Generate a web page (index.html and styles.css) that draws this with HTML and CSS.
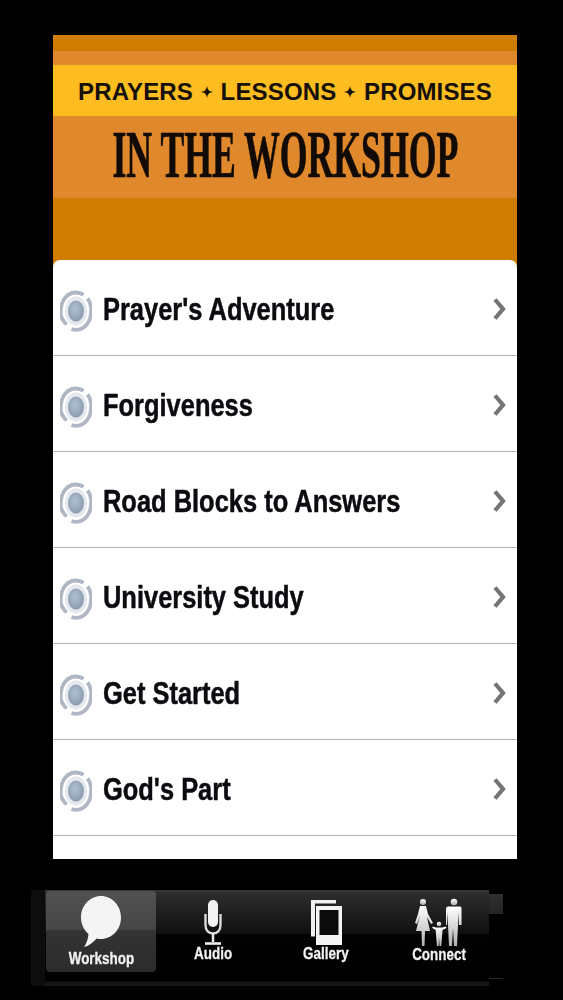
FILE: index.html
```html
<!DOCTYPE html>
<html lang="en">
<head>
<meta charset="utf-8">
<title>In the Workshop</title>
<link rel="stylesheet" href="styles.css">
</head>
<body>
<svg class="defs" width="0" height="0" aria-hidden="true">
  <defs>
    <radialGradient id="disc" cx="45%" cy="40%" r="60%">
      <stop offset="0" stop-color="#b3c2d2"/>
      <stop offset="1" stop-color="#8b9bab"/>
    </radialGradient>
    <linearGradient id="steel" x1="0" y1="0" x2="0" y2="1">
      <stop offset="0" stop-color="#ffffff"/>
      <stop offset="1" stop-color="#b0b0b0"/>
    </linearGradient>
    <symbol id="bullet" viewBox="0 0 32 42">
      <ellipse cx="16" cy="21" rx="11" ry="14.5" fill="#e4e9ef"/>
      <ellipse cx="16" cy="21" rx="8" ry="10.5" fill="url(#disc)"/>
      <path d="M6.500 34.500C1 29 0 25 0.800 19 1.800 9 8 2.500 16 2.500c3 0 5.500.8 7.500 2.200" fill="none" stroke="#aeb7c3" stroke-width="3.800"/>
      <path d="M27.500 8.500c2.800 3.500 3.700 8 3.700 12.500 0 10.500-6.500 18.800-15.200 18.800-1.600 0-3-.3-4.500-.9" fill="none" stroke="#aeb7c3" stroke-width="3.800"/>
    </symbol>
    <symbol id="chevron" viewBox="0 0 14 26">
      <path d="M3 3.500l8 9.500-8 9.500" fill="none" stroke="#747474" stroke-width="4.200"/>
    </symbol>
  </defs>
</svg>

<main class="screen">
  <header class="banner">
    <div class="band band-top"></div>
    <div class="band band-thin"></div>
    <div class="band band-yellow"><span class="tagline">PRAYERS <span class="sep">✦</span> LESSONS <span class="sep">✦</span> PROMISES</span></div>
    <div class="band band-title"><h1 class="title">IN THE WORKSHOP</h1></div>
    <div class="band band-bottom"></div>
  </header>
  <ul class="list">
    <li class="row"><svg class="bullet"><use href="#bullet"/></svg><span class="label">Prayer's Adventure</span><svg class="chevron"><use href="#chevron"/></svg></li>
    <li class="row"><svg class="bullet"><use href="#bullet"/></svg><span class="label">Forgiveness</span><svg class="chevron"><use href="#chevron"/></svg></li>
    <li class="row"><svg class="bullet"><use href="#bullet"/></svg><span class="label">Road Blocks to Answers</span><svg class="chevron"><use href="#chevron"/></svg></li>
    <li class="row"><svg class="bullet"><use href="#bullet"/></svg><span class="label">University Study</span><svg class="chevron"><use href="#chevron"/></svg></li>
    <li class="row"><svg class="bullet"><use href="#bullet"/></svg><span class="label">Get Started</span><svg class="chevron"><use href="#chevron"/></svg></li>
    <li class="row"><svg class="bullet"><use href="#bullet"/></svg><span class="label">God's Part</span><svg class="chevron"><use href="#chevron"/></svg></li>
  </ul>
</main>

<nav class="tabbar">
  <div class="stub-left"></div>
  <div class="bar">
    <div class="tab tab-workshop">
      <svg class="icon icon-bubble" viewBox="0 0 40 51"><path d="M20 0C31 0 40 9.500 40 21.500S31 43 20 43C18.500 43 17 42.800 15.500 42.400 12 46.500 7.500 50 3 51 5.500 47.500 7 43 7.500 38 3 34 0 28 0 21.500 0 9.500 9 0 20 0Z" fill="#f4f4f4"/></svg>
      <span class="tab-label">Workshop</span>
    </div>
    <div class="tab tab-audio">
      <svg class="icon icon-mic" viewBox="0 0 18 46"><rect x="4" y="0" width="10" height="27" rx="5" fill="#f2f2f2"/><path d="M1.500 14v11c0 5 3 8.500 7.500 8.500s7.500-3.500 7.500-8.500V14" fill="none" stroke="#dcdcdc" stroke-width="2.400"/><path d="M9 33v9" stroke="#e8e8e8" stroke-width="2.500"/><path d="M1 43.500h16" stroke="#eee" stroke-width="2.600"/></svg>
      <span class="tab-label">Audio</span>
    </div>
    <div class="tab tab-gallery">
      <svg class="icon icon-gallery" viewBox="0 0 31 45"><path d="M0 0h25v3.500H4v33H0Z" fill="#f0f0f0"/><rect x="5" y="6" width="26" height="39" fill="#f4f4f4"/><rect x="8.500" y="10" width="19" height="25" fill="#0b0b0b"/></svg>
      <span class="tab-label">Gallery</span>
    </div>
    <div class="tab tab-connect">
      <svg class="icon icon-family" viewBox="0 0 48 50" fill="url(#steel)"><circle cx="8" cy="4" r="3"/><path d="M5 8h6l2 8 5 9-2 1-4-7 3 14H10l-.5 15H7L6.500 33H1l4-16-3 9-2-1 3-9Z"/><circle cx="39" cy="4" r="3.300"/><path d="M33 8.500h12c1 0 1.500 1 1.500 2V27H44l-.5-13-.5 13-1 21h-3l-1-18-1 18h-3l-1-21-.5-13-.5 13H31V10.500c0-1 1-2 2-2Z"/><circle cx="24" cy="26" r="2.300"/><path d="M21 29.500h6l4-1 .5 1.500-4 2-.5 7-.7 9h-1.800l-.4-8-.4 8h-1.800l-.7-9-.5-7-3.500-2 .5-1.500Z"/></svg>
      <span class="tab-label">Connect</span>
    </div>
  </div>
  <div class="stub-right"></div>
</nav>
</body>
</html>
```

FILE: styles.css
```css
* { box-sizing: border-box; }

html, body {
  margin: 0;
  padding: 0;
  background: #000;
  height: 1000px;
  overflow: hidden;
}

.defs { display: block; height: 0; }

.screen {
  width: 464px;
  height: 824px;
  margin: 35px 0 0 53px;
  background: linear-gradient(#cf7c02 0, #cf7c02 240px, #fff 240px);
  overflow: hidden;
}

.banner {
  display: flex;
  flex-direction: column;
  height: 225px;
}

.band { display: flex; align-items: center; justify-content: center; }
.band-top { height: 16px; background: #cf7c02; }
.band-thin { height: 14px; background: #e0892c; }
.band-yellow { height: 51px; background: #fdbd20; padding-top: 2px; }
.band-title { height: 82px; background: #e0892c; padding-bottom: 7px; }
.band-bottom { height: 62px; background: #cf7c02; }

.tagline {
  font-family: "Liberation Sans", sans-serif;
  font-weight: 700;
  font-size: 24px;
  letter-spacing: 0.150px;
  color: #16100a;
  white-space: nowrap;
}

.sep { font-size: 14px; letter-spacing: 0; vertical-align: 3px; margin: 0 1px; }

.title {
  margin: 0;
  font-family: "Liberation Serif", serif;
  font-weight: 700;
  font-size: 68px;
  line-height: 1;
  color: #120a04;
  white-space: nowrap;
  transform: scaleX(0.525);
  -webkit-text-stroke: 0.7px #120a04;
}

.list {
  list-style: none;
  margin: 0;
  padding: 0;
  background: #fff;
  border-radius: 7px 7px 0 0;
}

.row {
  display: flex;
  align-items: center;
  height: 96px;
  padding: 0 11px 0 7px;
  border-bottom: 1.500px solid #b4b4b4;
}

.bullet { width: 32px; height: 42px; flex: none; margin-top: 7px; filter: blur(0.4px); }

.label {
  flex: 1;
  min-width: 0;
  margin-left: 11px;
  padding-top: 4px;
  font-family: "Liberation Sans", sans-serif;
  font-weight: 700;
  font-size: 32px;
  color: #0c0c10;
  white-space: nowrap;
  transform: scaleX(0.795);
  transform-origin: left center;
  -webkit-text-stroke: 0.5px #0c0c10;
}

.chevron { width: 14px; height: 26px; flex: none; margin-top: 3px; }

.tabbar {
  display: flex;
  align-items: flex-start;
  width: 472px;
  height: 96px;
  margin: 31px 0 0 31px;
}

.stub-left {
  width: 14px;
  height: 96px;
  background: #0d0d0d;
}

.bar {
  display: flex;
  align-items: flex-start;
  width: 444px;
  height: 96px;
  padding: 1px 0 0 1px;
  background:
    linear-gradient(#333 0, #3a3a3a 1px, #2e2e2e 2px, #0f0f0f 44px, #020202 44px, #000 91px, #161616 92px, #161616 100%);
}

.stub-right {
  width: 14px;
  height: 86px;
  margin-top: 4px;
  background:
    linear-gradient(#303030 0, #242424 20px, #000 20px, #000 84px, #2e2e2e 84px, #2e2e2e 85px, #000 85px);
}

.tab {
  display: flex;
  flex-direction: column;
  align-items: center;
  flex: none;
  height: 81px;
}

.tab-workshop {
  width: 110px;
  padding-top: 5px;
  border-radius: 4px;
  background: linear-gradient(#515151 0, #474747 39px, #343434 39px, #2b2b2b 100%);
}
.tab-audio { width: 114px; padding-top: 9px; }
.tab-gallery { width: 112px; padding-top: 9px; }
.tab-connect { width: 114px; padding-top: 7px; }

.icon { display: block; flex: none; }
.icon-bubble { width: 40px; height: 51px; }
.icon-mic { width: 18px; height: 46px; }
.icon-gallery { width: 31px; height: 45px; }
.icon-family { width: 48px; height: 50px; }

.tab-label {
  font-family: "Liberation Sans", sans-serif;
  font-weight: 700;
  font-size: 17px;
  line-height: 18px;
  color: #f2f2f2;
  white-space: nowrap;
  transform: scaleX(0.79);
  -webkit-text-stroke: 0.3px #f2f2f2;
}
.tab-workshop .tab-label { margin-top: 3px; }
.tab-audio .tab-label { margin-top: -1px; }
.tab-connect .tab-label { margin-top: -2px; }
```
